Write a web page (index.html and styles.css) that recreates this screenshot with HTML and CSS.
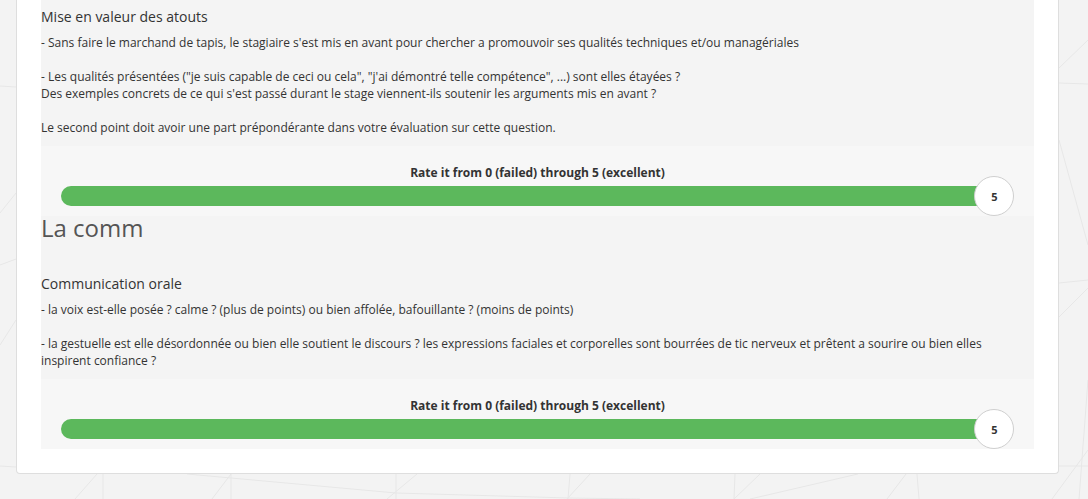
FILE: index.html
```html
<!DOCTYPE html>
<html lang="fr">
<head>
<meta charset="utf-8">
<title>Évaluation</title>
<link rel="stylesheet" href="styles.css">
</head>
<body>
<svg class="bg-mesh" width="1088" height="499" viewBox="0 0 1088 499" aria-hidden="true">
  <g stroke="#e7e7e7" stroke-width="1" fill="none">
    <line x1="0" y1="86" x2="16" y2="87"/>
    <line x1="0" y1="213" x2="16" y2="193"/>
    <line x1="0" y1="265" x2="16" y2="259"/>
    <line x1="0" y1="345" x2="16" y2="320"/>
    <line x1="0" y1="466" x2="16" y2="467"/>
    <line x1="1059" y1="68" x2="1088" y2="40"/>
    <line x1="1059" y1="83" x2="1088" y2="84"/>
    <line x1="1059" y1="140" x2="1088" y2="245"/>
    <line x1="1059" y1="283" x2="1088" y2="280"/>
    <line x1="1059" y1="317" x2="1088" y2="288"/>
    <line x1="1088" y1="380" x2="1079" y2="499"/>
    <line x1="1088" y1="450" x2="1052" y2="499"/>
    <line x1="1059" y1="466" x2="1088" y2="466"/>
    <line x1="97" y1="474" x2="75" y2="499"/>
    <line x1="103" y1="474" x2="103" y2="499"/>
    <line x1="231" y1="474" x2="212" y2="499"/>
    <line x1="231" y1="474" x2="231" y2="499"/>
    <line x1="187" y1="474" x2="396" y2="493"/>
    <line x1="396" y1="493" x2="569" y2="498"/>
    <line x1="569" y1="498" x2="640" y2="499"/>
    <line x1="396" y1="474" x2="396" y2="499"/>
    <line x1="417" y1="474" x2="387" y2="499"/>
    <line x1="570" y1="474" x2="568" y2="499"/>
    <line x1="590" y1="474" x2="567" y2="499"/>
    <line x1="735" y1="474" x2="734" y2="499"/>
    <line x1="760" y1="474" x2="734" y2="499"/>
    <line x1="858" y1="474" x2="750" y2="499"/>
    <line x1="906" y1="474" x2="887" y2="499"/>
    <line x1="917" y1="474" x2="919" y2="499"/>
  </g>
</svg>
<div class="page">
  <div class="card">
    <div class="content">
      <section class="question first">
        <h4 class="q-title">Mise en valeur des atouts</h4>
        <p class="q-desc">- Sans faire le marchand de tapis, le stagiaire s'est mis en avant pour chercher a promouvoir ses qualités techniques et/ou managériales<br><br>- Les qualités présentées ("je suis capable de ceci ou cela", "j'ai démontré telle compétence", ...) sont elles étayées ?<br>Des exemples concrets de ce qui s'est passé durant le stage viennent-ils soutenir les arguments mis en avant ?<br><br>Le second point doit avoir une part prépondérante dans votre évaluation sur cette question.</p>
        <div class="rate">
          <div class="rate-label">Rate it from 0 (failed) through 5 (excellent)</div>
          <div class="slider">
            <div class="track" style="width:100%"></div>
            <div class="knob">5</div>
          </div>
        </div>
      </section>
      <h3 class="category">La comm</h3>
      <section class="question">
        <h4 class="q-title">Communication orale</h4>
        <p class="q-desc">- la voix est-elle posée ? calme ? (plus de points) ou bien affolée, bafouillante ? (moins de points)<br><br>- la gestuelle est elle désordonnée ou bien elle soutient le discours ? les expressions faciales et corporelles sont bourrées de tic nerveux et prêtent a sourire ou bien elles inspirent confiance ?</p>
        <div class="rate">
          <div class="rate-label">Rate it from 0 (failed) through 5 (excellent)</div>
          <div class="slider">
            <div class="track" style="width:100%"></div>
            <div class="knob">5</div>
          </div>
        </div>
      </section>
    </div>
  </div>
</div>
</body>
</html>
```

FILE: styles.css
```css
html, body {
  margin: 0;
  padding: 0;
}

body {
  background: #f3f3f3;
  font-family: "Open Sans", "Liberation Sans", sans-serif;
  font-size: 12px;
  color: #333;
  position: relative;
  min-height: 499px;
  overflow: hidden;
}

.bg-mesh {
  position: absolute;
  left: 0;
  top: 0;
  z-index: 0;
}

.page {
  position: relative;
  z-index: 1;
  margin: 0 29px 0 16px;
  padding-bottom: 25px;
}

.card {
  background: #fff;
  border: 1px solid #dedede;
  border-top: none;
  border-radius: 0 0 4px 4px;
  padding: 0 24px 24px;
}

.content {
  background: #f4f4f4;
  padding-top: 7px;
}

.q-title {
  margin: 0 0 7px;
  font-size: 14px;
  line-height: 20px;
  font-weight: 400;
  color: #333;
}

.q-desc {
  margin: 0 0 10px;
  font-size: 12px;
  line-height: 17px;
}

.rate {
  background: #f7f7f7;
  height: 70px;
  box-sizing: border-box;
  padding: 19px 20px 10px;
}

.rate-label {
  text-align: center;
  font-weight: 700;
  font-size: 12px;
  line-height: 16px;
  color: #333;
}

.slider {
  position: relative;
  margin-top: 5px;
  height: 20px;
  padding-right: 20px;
}

.track {
  height: 20px;
  background: #5cb85c;
  border-radius: 10px 0 0 10px;
}

.knob {
  position: absolute;
  right: 0;
  top: -10px;
  width: 40px;
  height: 40px;
  box-sizing: border-box;
  border-radius: 50%;
  background: #fff;
  border: 1px solid #cfcfcf;
  display: flex;
  align-items: center;
  justify-content: center;
  padding-left: 1px;
  font-size: 11px;
  font-weight: 700;
  color: #333;
}

.category {
  margin: 0 0 34px;
  font-size: 24px;
  line-height: 24px;
  font-weight: 400;
  color: #555;
}
```
